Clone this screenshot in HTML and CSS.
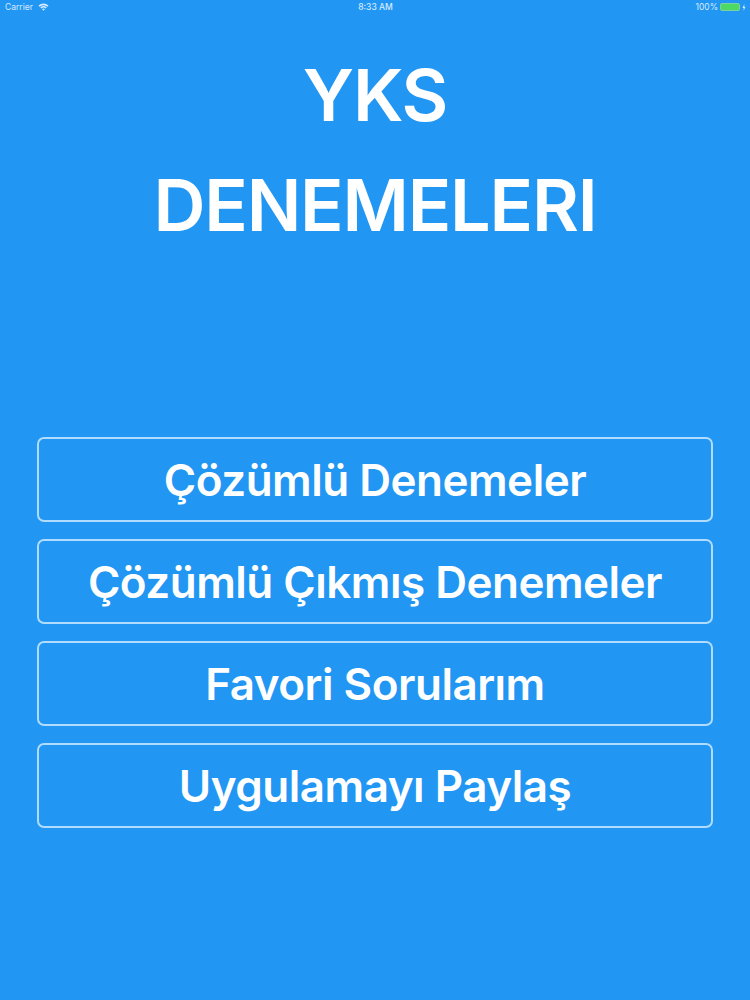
FILE: index.html
```html
<!DOCTYPE html>
<html lang="tr">
<head>
    <meta charset="UTF-8">
    <meta name="viewport" content="width=device-width, initial-scale=1.0">
    <title>YKS Denemeleri</title>
    <link rel="stylesheet" href="styles.css">
</head>
<body>

    <!-- STATUS BAR -->
    <div class="status_bar">
        <div class="status_left">
            <span>Carrier</span>
            <svg class="wifi" viewBox="0 0 12 9" width="11" height="8">
                <path d="M0.3 3 A8 8 0 0 1 11.7 3 L10.4 4.3 A6.2 6.2 0 0 0 1.6 4.3 Z" fill="#d6ebff"/>
                <path d="M2.4 5 A5 5 0 0 1 9.6 5 L8.4 6.2 A3.3 3.3 0 0 0 3.6 6.2 Z" fill="#d6ebff"/>
                <path d="M4.4 7 A2.3 2.3 0 0 1 7.6 7 L6 8.7 Z" fill="#d6ebff"/>
            </svg>
        </div>
        <div class="status_time">8:33 AM</div>
        <div class="status_right">
            <span>100%</span>
            <div class="battery"></div>
            <svg class="bolt" viewBox="0 0 4 8" width="4" height="7">
                <path d="M2.4 0 L0.3 4.5 H1.8 L1.4 8 L3.7 3.2 H2.2 Z" fill="#d6ebff"/>
            </svg>
        </div>
    </div>

    <h1 class="title">YKS<br>DENEMELERI</h1>

    <!-- MENU -->
    <div class="menu">
        <a href="#" class="menu_btn">Çözümlü Denemeler</a>
        <a href="#" class="menu_btn">Çözümlü Çıkmış Denemeler</a>
        <a href="#" class="menu_btn">Favori Sorularım</a>
        <a href="#" class="menu_btn">Uygulamayı Paylaş</a>
    </div>

</body>
</html>
```

FILE: styles.css
```css
body {
    margin: 0;
    height: 1000px;
    overflow: hidden;
    background-color: #2196f3;
    color: #fff;
    font-family: Inter, "Liberation Sans", sans-serif;
}

/* status bar */
.status_bar {
    display: grid;
    grid-template-columns: 1fr auto 1fr;
    align-items: center;
    height: 14px;
    padding: 0 4px 0 5px;
    font-size: 8.5px;
    color: #d6ebff;
}
.status_left {
    display: flex;
    align-items: center;
    gap: 5px;
}
.status_time {
    font-weight: 500;
}
.status_right {
    display: flex;
    align-items: center;
    justify-content: flex-end;
    gap: 2px;
}
.battery {
    width: 20px;
    height: 8px;
    box-sizing: border-box;
    border: 1px solid #7fd0a0;
    border-radius: 2px;
    background-color: #4cd964;
}

/* title */
.title {
    margin: 26px 0 0;
    font-size: 72px;
    line-height: 110px;
    font-weight: 600;
    letter-spacing: -1.2px;
    text-align: center;
}

/* menu */
.menu {
    display: flex;
    flex-direction: column;
    gap: 17px;
    margin: 177px 37px 0;
}
.menu_btn {
    display: flex;
    align-items: center;
    justify-content: center;
    height: 85px;
    box-sizing: border-box;
    border: 2px solid #b0dcff;
    border-radius: 7px;
    color: #fff;
    font-size: 44px;
    font-weight: 600;
    letter-spacing: -0.5px;
    text-decoration: none;
}
```
